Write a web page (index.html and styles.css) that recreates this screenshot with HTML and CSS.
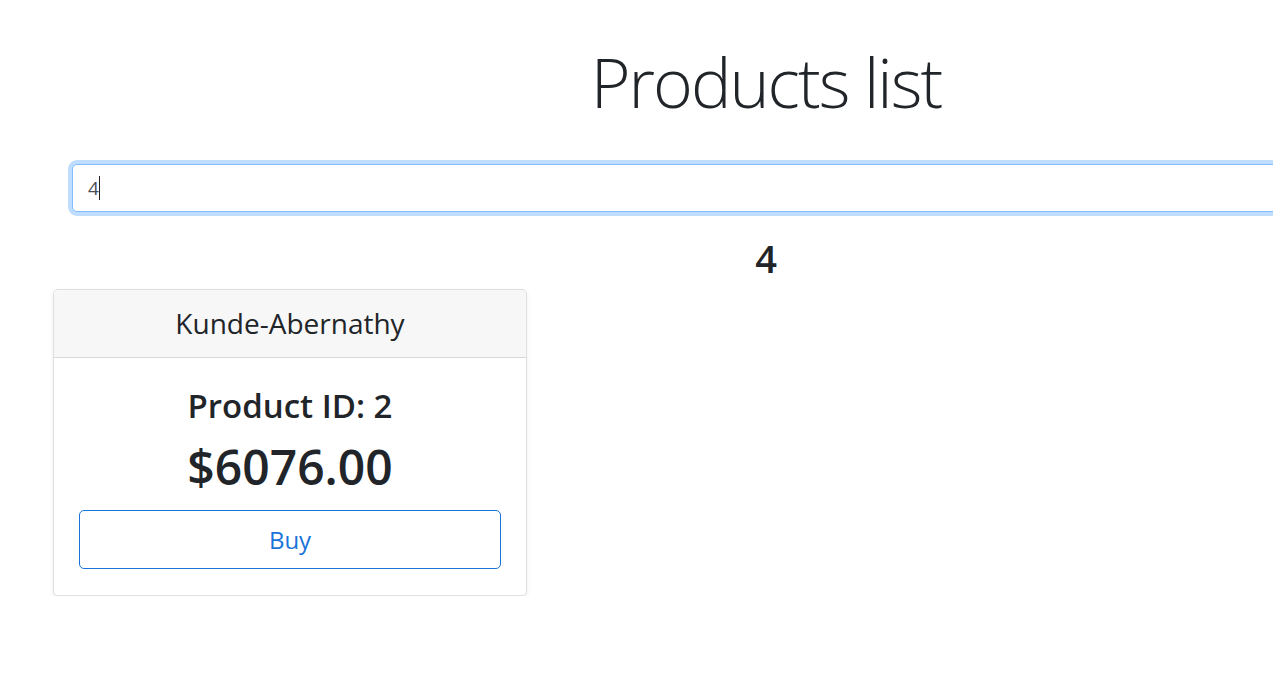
FILE: index.html
```html
<!DOCTYPE html>
<html lang="en">
<head>
<meta charset="utf-8">
<title>Products list</title>
<link rel="stylesheet" href="styles.css">
</head>
<body>
<div class="page">
  <h1 class="title">Products list</h1>
  <div class="search-row">
    <div class="search"><span class="search-value">4</span><span class="caret"></span></div>
  </div>
  <h2 class="count">4</h2>
  <div class="cards">
    <div class="card">
      <div class="card-header">Kunde-Abernathy</div>
      <div class="card-body">
        <h3 class="product-id">Product ID: 2</h3>
        <h1 class="price">$6076.00</h1>
        <button class="btn-buy" type="button">Buy</button>
      </div>
    </div>
  </div>
</div>
</body>
</html>
```
FILE: styles.css
```css
html, body {
  margin: 0;
  padding: 0;
  background: #fff;
  overflow: hidden;
}
body {
  font-family: "Open Sans", "Noto Sans", "DejaVu Sans", sans-serif;
  color: #212529;
}
.page {
  width: 1532px;
}
.title {
  margin: 40px 0 0;
  text-align: center;
  font-size: 68px;
  font-weight: 300;
  line-height: 84px;
  letter-spacing: -2px;
}
.search-row {
  margin-top: 40px;
  padding-left: 72px;
}
.search {
  width: 1420px;
  height: 48px;
  box-sizing: border-box;
  border: 1px solid #80bdff;
  border-radius: 5px;
  box-shadow: 0 0 0 4px rgba(0, 123, 255, 0.25);
  display: flex;
  align-items: center;
  padding: 0 15px;
  font-size: 19px;
  color: #495057;
  background: #fff;
}
.caret {
  display: inline-block;
  width: 1px;
  height: 24px;
  background: #222;
  margin-left: 0;
}
.count {
  margin: 22px 0 0;
  text-align: center;
  font-size: 38px;
  font-weight: 600;
  line-height: 48px;
}
.cards {
  margin-top: 7px;
  padding-left: 53px;
}
.card {
  width: 474px;
  box-sizing: border-box;
  border: 1px solid rgba(0, 0, 0, 0.125);
  border-radius: 5px;
  box-shadow: 0 2px 4px rgba(0, 0, 0, 0.075);
  background: #fff;
  overflow: hidden;
}
.card-header {
  background: #f7f7f7;
  border-bottom: 1px solid rgba(0, 0, 0, 0.125);
  text-align: center;
  font-size: 28px;
  line-height: 36px;
  padding: 15px 25px 16px;
}
.card-body {
  padding: 26px 25px 26px;
  text-align: center;
}
.product-id {
  margin: 0 0 9px;
  font-size: 33px;
  font-weight: 600;
  line-height: 44px;
}
.price {
  margin: 0 0 13px;
  font-size: 48px;
  font-weight: 600;
  line-height: 60px;
}
.btn-buy {
  display: block;
  width: 100%;
  height: 59px;
  box-sizing: border-box;
  border: 1px solid #1a73d9;
  border-radius: 5px;
  background: #fff;
  color: #1a73d9;
  font-family: inherit;
  font-size: 24px;
  line-height: 36px;
  cursor: pointer;
}
```
